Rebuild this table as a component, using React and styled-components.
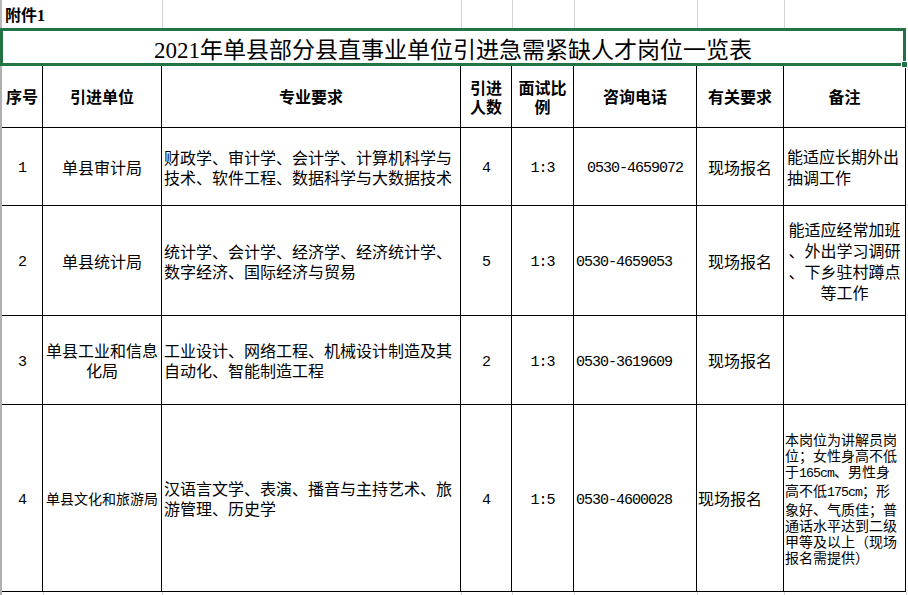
import React from "react";
import styled, { createGlobalStyle } from "styled-components";

const COLS = "42px 119px 299px 51px 62px 123px 87px 122px";
const GRID_GRAY = "#d4d4d4";
const EXCEL_GREEN = "#217346";

const GlobalStyle = createGlobalStyle`
  html, body {
    margin: 0;
    padding: 0;
    background: #fff;
  }
  body {
    font-family: "Noto Sans CJK SC", "Noto Sans", sans-serif;
    color: #000;
  }
`;

const Sheet = styled.div`
  width: 908px;
  height: 595px;
  overflow: hidden;
  background: #fff;
`;

const NoteRow = styled.div`
  display: grid;
  grid-template-columns: 161px 299px 51px 62px 123px 87px 122px;
  height: 28px;
  box-sizing: border-box;
  width: 906px;
  border-left: 2px solid #b8b8b8;
`;

const NoteCell = styled.div`
  box-sizing: border-box;
  border-right: ${p => (p.$last ? "none" : `1px solid ${GRID_GRAY}`)};
  display: flex;
  align-items: center;
  padding-left: 3px;
  font-family: "Liberation Serif", "Noto Sans CJK SC", serif;
  font-weight: 700;
  font-size: 16px;
`;

const TitleBar = styled.div`
  position: relative;
  box-sizing: border-box;
  width: 906px;
  height: 38px;
  border: 3px solid ${EXCEL_GREEN};
  display: flex;
  align-items: center;
  justify-content: center;
  font-family: "Liberation Serif", "Noto Sans CJK SC", serif;
  font-size: 23px;
  padding-top: 1px;
`;

const Handle = styled.span`
  position: absolute;
  right: -5px;
  bottom: -5px;
  width: 5px;
  height: 5px;
  background: ${EXCEL_GREEN};
  border: 1px solid #fff;
`;

const Table = styled.div`
  width: 906px;
  box-sizing: border-box;
  border-left: 2px solid #b0b0b0;
`;

const Row = styled.div`
  display: grid;
  grid-template-columns: 41px 119px 299px 51px 62px 123px 87px 122px;
  height: ${p => p.$h}px;
`;

const Cell = styled.div`
  box-sizing: border-box;
  display: flex;
  align-items: center;
  justify-content: ${p => (p.$align === "left" ? "flex-start" : "center")};
  text-align: ${p => p.$align || "center"};
  padding: 0 ${p => p.$pad ?? 2}px;
  border-right: 1px solid #000;
  border-bottom: 1px solid #000;
  font-size: ${p => p.$size || 16}px;
  line-height: ${p => p.$lh || 20}px;
  font-weight: ${p => (p.$bold ? 700 : 400)};
  white-space: nowrap;
  overflow: hidden;
`;

const Text = styled.span`
  display: block;
`;

/* SimSun-like half-width digits: 0.5em advance, but full height */
const Num = styled.span`
  font-family: "Liberation Mono", "DejaVu Sans Mono", monospace;
  font-size: 0.94em;
  letter-spacing: -0.068em;
`;

const TailRow = styled.div`
  display: grid;
  grid-template-columns: ${COLS};
  height: 4px;
  width: 906px;
  box-sizing: border-box;
  border-left: 2px solid #b0b0b0;
`;

const TailCell = styled.div`
  border-right: 1px solid ${GRID_GRAY};
`;

const headers = [
  ["序号"],
  ["引进单位"],
  ["专业要求"],
  ["引进", "人数"],
  ["面试比", "例"],
  ["咨询电话"],
  ["有关要求"],
  ["备注"],
];

const lines = arr =>
  arr.map((l, i) => (
    <React.Fragment key={i}>
      {i > 0 && <br />}
      {l}
    </React.Fragment>
  ));

const rows = [
  {
    h: 78,
    no: "1",
    unit: { text: ["单县审计局"] },
    major: ["财政学、审计学、会计学、计算机科学与", "技术、软件工程、数据科学与大数据技术"],
    count: "4",
    ratio: "1:3",
    phone: { text: "0530-4659072", align: "center" },
    req: { align: "center" },
    note: { text: ["能适应长期外出", "抽调工作"], align: "left", pad: 3, size: 16, lh: 21 },
  },
  {
    h: 110,
    no: "2",
    unit: { text: ["单县统计局"] },
    major: ["统计学、会计学、经济学、经济统计学、", "数字经济、国际经济与贸易"],
    count: "5",
    ratio: "1:3",
    phone: { text: "0530-4659053", align: "left" },
    req: { align: "center" },
    note: {
      text: ["能适应经常加班", "、外出学习调研", "、下乡驻村蹲点", "等工作"],
      align: "center",
      pad: 2,
      size: 16,
      lh: 21,
    },
  },
  {
    h: 89,
    no: "3",
    unit: { text: ["单县工业和信息", "化局"] },
    major: ["工业设计、网络工程、机械设计制造及其", "自动化、智能制造工程"],
    count: "2",
    ratio: "1:3",
    phone: { text: "0530-3619609", align: "left" },
    req: { align: "center" },
    note: null,
  },
  {
    h: 187,
    no: "4",
    unit: { text: ["单县文化和旅游局"], size: 14 },
    major: ["汉语言文学、表演、播音与主持艺术、旅", "游管理、历史学"],
    count: "4",
    ratio: "1:5",
    phone: { text: "0530-4600028", align: "left" },
    req: { align: "left", pad: 1 },
    note: {
      text: [
        "本岗位为讲解员岗",
        "位；女性身高不低",
        <>于<Num>165cm</Num>、男性身</>,
        <>高不低<Num>175cm</Num>；形</>,
        "象好、气质佳；普",
        "通话水平达到二级",
        "甲等及以上（现场",
        "报名需提供）",
      ],
      align: "left",
      pad: 1,
      size: 14,
      lh: 16,
    },
  },
];

export default function App() {
  return (
    <Sheet>
      <GlobalStyle />
      <NoteRow>
        <NoteCell>附件1</NoteCell>
        <NoteCell />
        <NoteCell />
        <NoteCell />
        <NoteCell />
        <NoteCell />
        <NoteCell $last />
      </NoteRow>

      <TitleBar>
        2021年单县部分县直事业单位引进急需紧缺人才岗位一览表
        <Handle />
      </TitleBar>

      <Table>
        <Row $h={62}>
          {headers.map((h, i) => (
            <Cell key={i} $bold $lh={19}>
              <Text>{lines(h)}</Text>
            </Cell>
          ))}
        </Row>

        {rows.map(r => (
          <Row key={r.no} $h={r.h}>
            <Cell>
              <Text><Num>{r.no}</Num></Text>
            </Cell>
            <Cell $size={r.unit.size}>
              <Text>{lines(r.unit.text)}</Text>
            </Cell>
            <Cell $align="left" $pad={2}>
              <Text>{lines(r.major)}</Text>
            </Cell>
            <Cell>
              <Text><Num>{r.count}</Num></Text>
            </Cell>
            <Cell>
              <Text><Num>{r.ratio}</Num></Text>
            </Cell>
            <Cell $align={r.phone.align}>
              <Text><Num>{r.phone.text}</Num></Text>
            </Cell>
            <Cell $align={r.req.align} $pad={r.req.pad}>
              <Text>现场报名</Text>
            </Cell>
            {r.note ? (
              <Cell
                $align={r.note.align}
                $pad={r.note.pad}
                $size={r.note.size}
                $lh={r.note.lh}
              >
                <Text>{lines(r.note.text)}</Text>
              </Cell>
            ) : (
              <Cell />
            )}
          </Row>
        ))}
      </Table>

      <TailRow>
        {Array.from({ length: 8 }).map((_, i) => (
          <TailCell key={i} />
        ))}
      </TailRow>
    </Sheet>
  );
}
